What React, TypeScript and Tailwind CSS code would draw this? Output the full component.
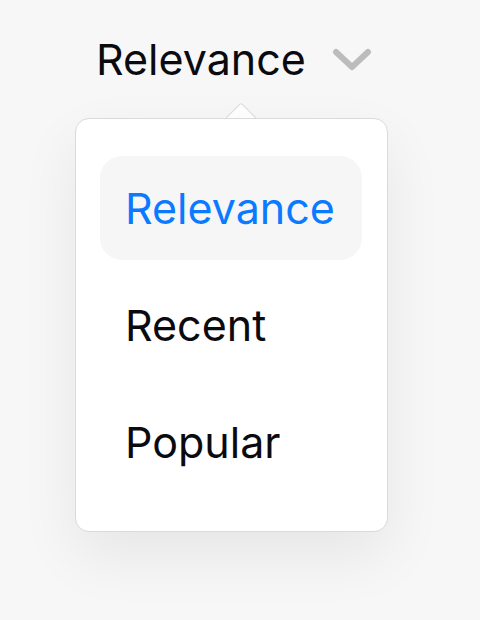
import { useState } from "react";

const options = ["Relevance", "Recent", "Popular"];

export default function App() {
  const [selected, setSelected] = useState("Relevance");

  return (
    <div className="min-h-[620px] w-[480px] bg-[#f7f7f7] font-['Inter',sans-serif] text-[#0b0b0f]">
      <div className="flex flex-col pl-[75px] pt-[30px]">
        {/* Trigger */}
        <button
          type="button"
          className="ml-[21px] flex h-[58px] items-center gap-[26px] text-[43px] leading-none"
        >
          <span>{selected}</span>
          <svg width="40" height="26" viewBox="0 0 40 26" fill="none" className="mt-[2px]">
            <path
              d="M4 5 L20 20 L36 5"
              stroke="#bcbcbc"
              strokeWidth="6"
              strokeLinecap="round"
              strokeLinejoin="round"
            />
          </svg>
        </button>

        {/* Menu */}
        <div className="relative mt-[30px] w-[313px]">
          <div className="absolute left-[155px] top-[-11px] h-[22px] w-[22px] rotate-45 rounded-[2px] border border-[#dcdcdc] bg-white" />
          <ul className="relative flex h-[414px] flex-col gap-[13px] rounded-[14px] border border-[#dadada] bg-white px-[24px] py-[37px] shadow-[0_24px_60px_rgba(0,0,0,0.07)]">
            {options.map((o) => {
              const active = o === selected;
              return (
                <li key={o}>
                  <button
                    type="button"
                    onClick={() => setSelected(o)}
                    className={
                      active
                        ? "flex h-[104px] w-[262px] items-center rounded-[22px] bg-[#f6f6f6] pl-[25px] text-[43px] leading-none text-[#0a7aff]"
                        : "flex h-[104px] w-[262px] items-center rounded-[22px] pl-[25px] text-[43px] leading-none text-[#0b0b0f]"
                    }
                  >
                    {o}
                  </button>
                </li>
              );
            })}
          </ul>
          {/* white patch hides the caret's lower half over the card border */}
          <div className="absolute left-[152px] top-[1px] h-[12px] w-[28px] bg-white" />
        </div>
      </div>
    </div>
  );
}
